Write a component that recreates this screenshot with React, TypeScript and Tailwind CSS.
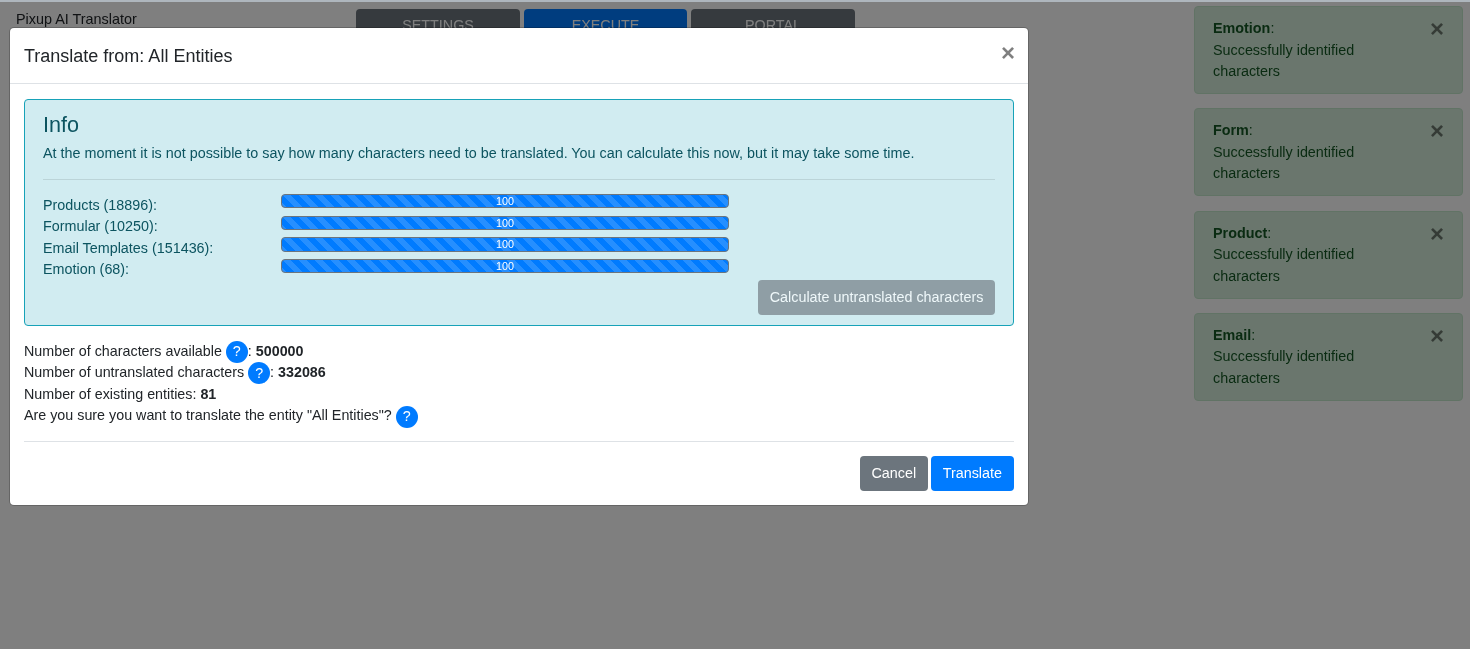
import React from "react";

const toasts = ["Emotion", "Form", "Product", "Email"];

const progressRows = [
  "Products (18896):",
  "Formular (10250):",
  "Email Templates (151436):",
  "Emotion (68):",
];

const HelpBadge = () => (
  <span className="inline-flex w-[22px] h-[22px] items-center justify-center rounded-full bg-[#007bff] text-white align-middle">
    ?
  </span>
);

const App = () => {
  return (
    <div className="relative w-full h-[649px] overflow-hidden bg-white font-['Liberation_Sans',sans-serif] text-[14.35px] leading-[21.6px] text-[#212529]">
      <div className="flex items-start pt-[9px] pl-[16px] will-change-transform">
        <div className="w-[340px] text-[14.4px]">Pixup AI Translator</div>
        <div className="flex gap-[4px]">
          <div className="w-[164px] h-[40px] pt-[6px] text-center rounded-[4px] bg-[#6c757d] text-white">
            SETTINGS
          </div>
          <div className="w-[163px] h-[40px] pt-[6px] text-center rounded-[4px] bg-[#007bff] text-white">
            EXECUTE
          </div>
          <div className="w-[164px] h-[40px] pt-[6px] text-center rounded-[4px] bg-[#6c757d] text-white">
            PORTAL
          </div>
        </div>
      </div>

      {/* toasts stacked top right */}
      <div className="absolute top-[6px] right-[7px] w-[269px] flex flex-col gap-[14.28px] will-change-transform">
        {toasts.map((name) => (
          <div
            key={name}
            className="relative h-[88px] rounded-[4px] border border-[#c3e6cb] bg-[#d4edda] text-[#155724] pt-[11px] px-[18px]"
          >
            <div>
              <b>{name}</b>:
            </div>
            <div className="w-[170px]">Successfully identified characters</div>
            <span className="absolute top-[10px] right-[18px] text-[24px] leading-[24px] font-bold text-black/50">
              ×
            </span>
          </div>
        ))}
      </div>

      <div className="absolute inset-0 bg-black/50 will-change-transform" />
      <div className="absolute top-0 left-0 right-0 h-[2px] bg-[#aeb6bd] will-change-transform" />

      {/* modal */}
      <div className="absolute top-[28px] left-[10px] w-[1018px] bg-white rounded-[4px] shadow-[0_0_0_1px_rgba(0,0,0,.2)] will-change-transform">
        <div className="flex items-center justify-between h-[56px] px-[14px] border-b border-[#dee2e6]">
          <div className="text-[18px] leading-[27px] mt-[1px]">Translate from: All Entities</div>
          <span className="text-[24px] font-bold text-black/50 -mt-[6px] -mr-[1px]">×</span>
        </div>
        <div className="px-[14px] pt-[15.4px]">
          <div className="rounded-[4px] border border-[#17a2b8] bg-[#d1ecf1] text-[#0c5460] px-[18px] pt-[10.8px] pb-[9.6px]">
            <div className="text-[21.6px] leading-[26px] pt-[1px] mb-[4.4px]">Info</div>
            <p className="mb-[15px]">
              At the moment it is not possible to say how many characters need to be translated. You
              can calculate this now, but it may take some time.
            </p>
            <hr className="border-black/10 mb-[13.8px]" />
            {progressRows.map((label) => (
              <div key={label} className="flex h-[21.6px]">
                <div className="w-[238px] pt-[0.6px]">{label}</div>
                <div className="w-[448px] h-[14.4px] rounded-[4px] border border-[#6c757d] bg-[#007bff] bg-[linear-gradient(45deg,rgba(255,255,255,.15)_25%,transparent_25%,transparent_50%,rgba(255,255,255,.15)_50%,rgba(255,255,255,.15)_75%,transparent_75%,transparent)] bg-[length:16px_16px] text-white text-[10.8px] leading-[13px] text-center">
                  100
                </div>
              </div>
            ))}
            <div className="flex justify-end">
              <button className="h-[35px] px-[11.6px] rounded-[4px] bg-[#6c757d] opacity-65 text-white">
                Calculate untranslated characters
              </button>
            </div>
          </div>

          <div className="pt-[14.6px] pb-[14px] text-[14.3px]">
            <div className="h-[21.6px]">
              Number of characters available <HelpBadge />: <b>500000</b>
            </div>
            <div className="h-[21.6px]">
              Number of untranslated characters <HelpBadge />: <b>332086</b>
            </div>
            <div className="h-[21.6px]">
              Number of existing entities: <b>81</b>
            </div>
            <div className="h-[21.6px]">
              Are you sure you want to translate the entity "All Entities"? <HelpBadge />
            </div>
          </div>
        </div>
        <div className="mx-[14px] border-t border-[#dee2e6] py-[14px] flex justify-end gap-[3px]">
          <button className="h-[35px] px-[11.6px] rounded-[4px] bg-[#6c757d] text-white">Cancel</button>
          <button className="h-[35px] px-[12px] rounded-[4px] bg-[#007bff] text-white">Translate</button>
        </div>
      </div>
    </div>
  );
};

export default App;
